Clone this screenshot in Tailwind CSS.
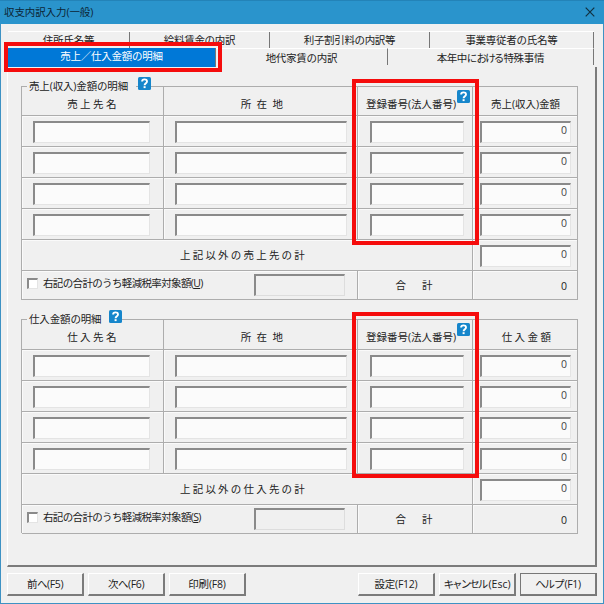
<!DOCTYPE html>
<html lang="ja">
<head>
<meta charset="utf-8">
<title>収支内訳入力(一般)</title>
<script src="https://cdn.jsdelivr.net/npm/@tailwindcss/browser@4"></script>
</head>
<body class="w-[604px] h-[604px] overflow-hidden">
<div class="relative w-[604px] h-[604px] flex flex-col bg-[#f0f0f0] border-l border-r border-b border-[#3d92c4] font-['Open_Sans','Noto_Sans_CJK_JP',sans-serif] text-[10.5px] leading-[14px] text-[#222] whitespace-nowrap">
  <header class="h-[24px] -mx-px shrink-0 bg-[#2a94cc] border-t border-[#2383b8] flex items-center justify-between pl-[4px] pr-[9px] text-[#0c2636]">
    <span class="tracking-[-0.1px] relative top-[-1px]">収支内訳入力(一般)</span>
    <svg class="w-[10px] h-[10px] relative top-[-1px]" viewBox="0 0 10 10" fill="none" stroke="#12303f" stroke-width="1.2"><path d="M.7.7l8.6 8.6M9.3.7L.7 9.3"/></svg>
  </header>

  <nav class="mt-[7px] ml-[7px] w-[586px] shrink-0">
    <div class="h-[17px] flex border-t border-white text-center leading-[17px] tracking-[-0.15px]">
      <div class="w-[122px] border-r border-[#777] h-[16px]">住所氏名等</div>
      <div class="w-[140px] border-r border-[#777] h-[16px]"><span class="tracking-[-0.3px]">給料賃金の内訳</span></div>
      <div class="w-[160px] border-r border-[#777] h-[16px]"><span class="tracking-[-0.35px]">利子割引料の内訳等</span></div>
      <div class="w-[164px] border-r border-[#777] h-[16px]"><span class="tracking-[-0.25px]">事業専従者の氏名等</span></div>
    </div>
    <div class="h-[19px] flex text-center leading-[18px]">
      <div class="w-[208px] h-[19px] bg-[#0078d7] text-white border-r border-[#777] tracking-[-0.25px] leading-[17px]">売上／仕入金額の明細</div>
      <div class="w-[172px] h-[17px] border-t border-white border-r border-r-[#777] tracking-[-0.25px]">地代家賃の内訳</div>
      <div class="w-[206px] h-[17px] border-t border-white border-r border-r-[#777]"><span class="tracking-[-0.55px]">本年中に</span><span class="tracking-[-1.9px]">おける</span><span class="tracking-[-0.3px] pl-[1px]">特殊事情</span></div>
    </div>
  </nav>

  <main class="ml-[6px] w-[590px] h-[500px] shrink-0 border-l border-l-white border-r-2 border-b-2 border-r-[#7b7b7b] border-b-[#7b7b7b] pl-[13px] pt-[19px] flex flex-col gap-[19px]" id="panel"></main>

  <footer class="mt-[6px] pl-[6px] pr-[6px] flex justify-between" id="footer"></footer>

  <div class="absolute left-[3px] top-[42px] w-[218px] h-[30px] border-4 border-[#f50c0c]"></div>
  <div class="absolute left-[351px] top-[79px] w-[127px] h-[166px] border-4 border-[#f50c0c]"></div>
  <div class="absolute left-[351px] top-[312px] w-[127px] h-[166px] border-4 border-[#f50c0c]"></div>
</div>

<script>
const help = pos => `<svg class="absolute ${pos} w-[13px] h-[13px]" viewBox="0 0 13 13"><rect width="13" height="13" rx="1.5" fill="#1686cb"/><path d="M4.1 4.6C4.1 1.6 9 1.6 9 4.5c0 1.6-2.4 1.8-2.4 3.7" fill="none" stroke="#fff" stroke-width="1.9"/><rect x="5.6" y="9.2" width="2" height="1.9" fill="#fff"/></svg>`;
const line = "border-r border-b border-[#adadad] shadow-[inset_1px_1px_0_#fafafa]";
const field = (w, v = "") => `<div class="${w} h-[22px] mt-[5px] bg-[#fbfbfb] border-t-2 border-l-2 border-t-[#8a8a8a] border-l-[#8a8a8a] border-r border-b border-r-[#e4e4e4] border-b-[#e4e4e4] text-right pr-[3px] leading-[15px] text-[#444]">${v}</div>`;
const row = `
  <div class="${line} pl-[11px]">${field("w-[117px]")}</div>
  <div class="${line} pl-[11px]">${field("w-[172px]")}</div>
  <div class="${line} pl-[12px]">${field("w-[94px]")}</div>
  <div class="${line} pl-[7px]">${field("w-[91px]", "0")}</div>`;
const section = s => `
<section class="relative w-[557px] h-[214px] shrink-0 grid ${s.rows} grid-cols-[142px_194px_115px_105px] border-t border-l border-[#adadad]">
  <div class="absolute left-[5px] top-[-8px] ${s.legendW} bg-[#f0f0f0] pl-[2px] tracking-[-0.15px]">${s.legend}</div>
  ${help(s.helpPos)}
  <div class="border-r border-b border-[#adadad] text-center leading-[14px] pt-[10px] pl-[1px] tracking-[2.4px]">${s.name}</div>
  <div class="border-r border-b border-[#adadad] text-center leading-[14px] pt-[10px] tracking-[5.4px] pl-[8px]">所在地</div>
  <div class="relative border-r border-b border-[#adadad] leading-[14px] pt-[10px] pl-[8px]"><span>登録番号(法人番号)</span>${help("left-[99px] top-[3px]")}</div>
  <div class="border-r border-b border-[#adadad] leading-[14px] pt-[10px] text-center ${s.amtCls}">${s.amount}</div>
  ${row.repeat(4)}
  <div class="${line} col-span-3 text-center pt-[8px] pr-[7px] tracking-[2.2px]">${s.other}</div>
  <div class="${line} pl-[7px]">${field("w-[91px]", "0")}</div>
  <div class="${line} col-span-2 flex pl-[5px]">
    <div class="mt-[7px] w-[11px] h-[11px] bg-white border-t-2 border-l-2 border-t-[#8a8a8a] border-l-[#8a8a8a] border-r border-b border-r-[#e4e4e4] border-b-[#e4e4e4]"></div>
    <div class="pl-[5px] pt-[5px] w-[216px] tracking-[-0.65px]">右記の合計のうち軽減税率対象額(<u>${s.key}</u>)</div>
    <div class="mt-[3px] w-[91px] h-[22px] border-t-2 border-l-2 border-t-[#8a8a8a] border-l-[#8a8a8a] border-r border-b border-r-[#ddd] border-b-[#ddd]"></div>
  </div>
  <div class="${line} flex justify-center gap-[16px] pt-[7px] pr-[2px]"><span>合</span><span>計</span></div>
  <div class="${line} text-right pr-[10px] pt-[8px]">0</div>
</section>`;
document.getElementById("panel").innerHTML =
  section({rows: "grid-rows-[29px_31px_31px_31px_31px_31px_29px]", legend: "売上(収入)金額の明細", legendW: "w-[109px]", helpPos: "left-[116px] top-[-10px]", name: "売上先名", amount: "売上(収入)金額", amtCls: "tracking-[0px] pl-px", other: "上記以外の売上先の計", key: "U"}) +
  section({rows: "grid-rows-[30px_31px_31px_31px_31px_31px_29px]", legend: "仕入金額の明細", legendW: "w-[82px]", helpPos: "left-[87px] top-[-10px]", name: "仕入先名", amount: "仕入金額", amtCls: "tracking-[2.4px] pl-[5px]", other: "上記以外の仕入先の計", key: "S"});

const btn = (t, cls) => `<div class="w-[77px] h-[23px] border-t border-l border-t-white border-l-white border-r-2 border-b-2 border-r-[#7b7b7b] border-b-[#7b7b7b] text-center leading-[21px] ${cls}">${t}</div>`;
document.getElementById("footer").innerHTML =
  `<div class="flex gap-[4px]">${btn("前へ(F5)", "tracking-[-0.4px]")}${btn("次へ(F6)", "tracking-[-0.4px]")}${btn("印刷(F8)", "tracking-[-0.2px]")}</div>
   <div class="flex gap-[4px]">${btn("設定(F12)", "tracking-[-0.25px]")}${btn('<span class="tracking-[-1.9px]">キャンセル</span><span class="pl-[2px]">(Esc)</span>', "")}${btn('<span class="tracking-[-1.1px]">ヘルプ</span><span class="pl-[1px] tracking-[-0.3px]">(F1)</span>', "outline outline-1 -outline-offset-1 outline-[#777]")}</div>`;
</script>
</body>
</html>
